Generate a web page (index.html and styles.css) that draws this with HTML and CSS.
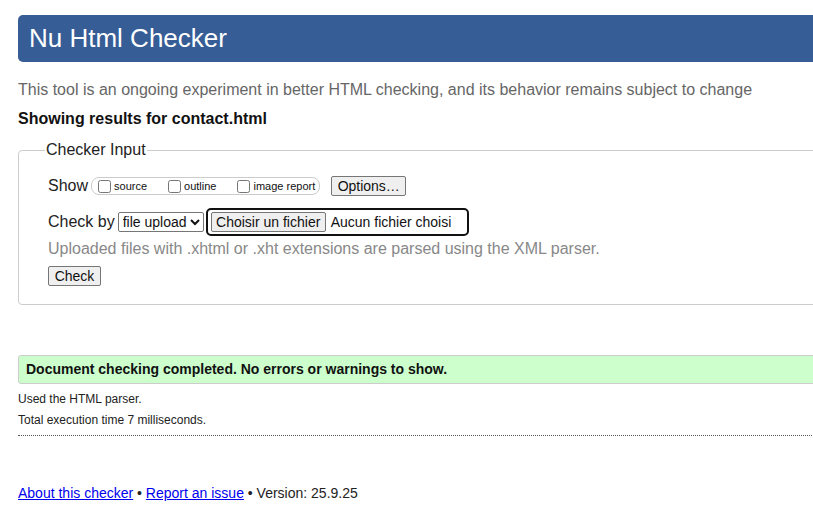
FILE: index.html
```html
<!DOCTYPE html>
<html lang="en">
<head>
<meta charset="utf-8">
<title>Nu Html Checker</title>
<link rel="stylesheet" href="styles.css">
</head>
<body>
<div class="page">
  <h1 class="title">Nu Html Checker</h1>
  <p class="intro">This tool is an ongoing experiment in better HTML checking, and its behavior remains subject to change</p>
  <p class="showing">Showing results for contact.html</p>
  <fieldset class="input-box">
    <legend class="legend">Checker Input</legend>
    <div class="row row-show">
      <span class="row-label">Show</span>
      <span class="check-group">
        <label class="opt"><input type="checkbox" class="cb"><span>source</span></label>
        <label class="opt"><input type="checkbox" class="cb"><span>outline</span></label>
        <label class="opt opt-last"><input type="checkbox" class="cb"><span>image report</span></label>
      </span>
      <button class="btn btn-options" type="button">Options…</button>
    </div>
    <div class="row row-check">
      <span class="row-label">Check by</span>
      <select class="sel"><option>file upload</option></select>
      <span class="file-wrap">
        <button class="btn btn-file" type="button">Choisir un fichier</button>
        <span class="file-name">Aucun fichier choisi</span>
      </span>
    </div>
    <p class="hint">Uploaded files with .xhtml or .xht extensions are parsed using the XML parser.</p>
    <button class="btn btn-check" type="button">Check</button>
  </fieldset>
  <p class="success">Document checking completed. No errors or warnings to show.</p>
  <p class="meta meta-first">Used the HTML parser.</p>
  <p class="meta meta-last">Total execution time 7 milliseconds.</p>
  <p class="footer"><a href="#">About this checker</a> • <a href="#">Report an issue</a> • Version: 25.9.25</p>
</div>
</body>
</html>
```
FILE: styles.css
```css
html, body {
  margin: 0;
  padding: 0;
  overflow: hidden;
  background: #fff;
}
body {
  font-family: "Liberation Sans", Arial, sans-serif;
  color: #222;
}
.page {
  width: 1100px;
  padding-left: 18px;
  padding-top: 15px;
}
.title {
  margin: 0;
  height: 47px;
  line-height: 47px;
  background: #365d96;
  color: #fff;
  font-weight: normal;
  font-size: 26px;
  padding-left: 11px;
  border-radius: 5px 0 0 5px;
}
.intro {
  margin: 19px 0 0;
  font-size: 16px;
  line-height: 18px;
  color: #666;
}
.showing {
  margin: 11px 0 0;
  font-size: 16px;
  line-height: 18px;
  font-weight: bold;
  color: #111;
}
.input-box {
  margin: 13px 0 0;
  border: 1px solid #ccc;
  border-radius: 4px 0 0 4px;
  padding: 16px 0 18px 29px;
  min-width: 0;
}
.legend {
  font-size: 16px;
  color: #222;
  padding: 0 1px;
  margin-left: -3px;
  line-height: 18px;
}
.row {
  display: flex;
  align-items: center;
}
.row-label {
  font-size: 16px;
  color: #222;
}
.row-show {
  height: 22px;
}
.check-group {
  display: inline-flex;
  align-items: center;
  height: 16px;
  margin-left: 3px;
  border: 1px solid #ccc;
  border-radius: 8px;
  padding: 0 4px 0 5px;
}
.opt {
  display: inline-flex;
  align-items: center;
  font-size: 11px;
  margin-right: 20px;
  color: #111;
}
.opt-last {
  margin-right: 0;
}
.cb {
  margin: 0 3px 0 1px;
  width: 13px;
  height: 13px;
}
.btn {
  font-family: "Liberation Sans", Arial, sans-serif;
  font-size: 14px;
  color: #111;
  background: #efefef;
  border: 1px solid #767676;
  border-radius: 2px;
  padding: 0 6px;
  height: 20px;
  line-height: 18px;
}
.btn-options {
  margin-left: 11px;
  width: 75px;
  padding: 0;
}
.row-check {
  margin-top: 11px;
  height: 28px;
}
.sel {
  font-family: "Liberation Sans", Arial, sans-serif;
  font-size: 14px;
  height: 20px;
  margin-left: 3px;
  padding: 0;
  border: 1px solid #767676;
  border-radius: 2px;
  color: #111;
  background: #fff;
  width: 86px;
}
.file-wrap {
  display: inline-flex;
  align-items: center;
  margin-left: 2px;
  height: 24px;
  width: 256px;
  border: 2px solid #111;
  border-radius: 5px;
  padding-left: 3px;
  box-sizing: content-box;
}
.btn-file {
  width: 115px;
  padding: 0;
}
.file-name {
  font-size: 14px;
  margin-left: 5px;
  color: #111;
}
.hint {
  margin: 4px 0 0;
  font-size: 16px;
  line-height: 18px;
  color: #888;
}
.btn-check {
  margin-top: 8px;
  width: 53px;
  padding: 0;
}
.success {
  margin: 50px 0 0;
  height: 27px;
  line-height: 27px;
  background: #ccffcc;
  border: 1px solid #ccc;
  border-radius: 3px 0 0 3px;
  padding-left: 7px;
  font-size: 14px;
  font-weight: bold;
  color: #111;
}
.meta {
  margin: 0;
  font-size: 12px;
  line-height: 14px;
  color: #222;
}
.meta-first {
  margin-top: 8px;
}
.meta-last {
  margin-top: 7px;
  padding-bottom: 8px;
  border-bottom: 1px dotted #555;
}
.footer {
  margin: 49px 0 0;
  font-size: 14px;
  line-height: 16px;
  color: #222;
}
.footer a {
  color: #0000ee;
}
```
